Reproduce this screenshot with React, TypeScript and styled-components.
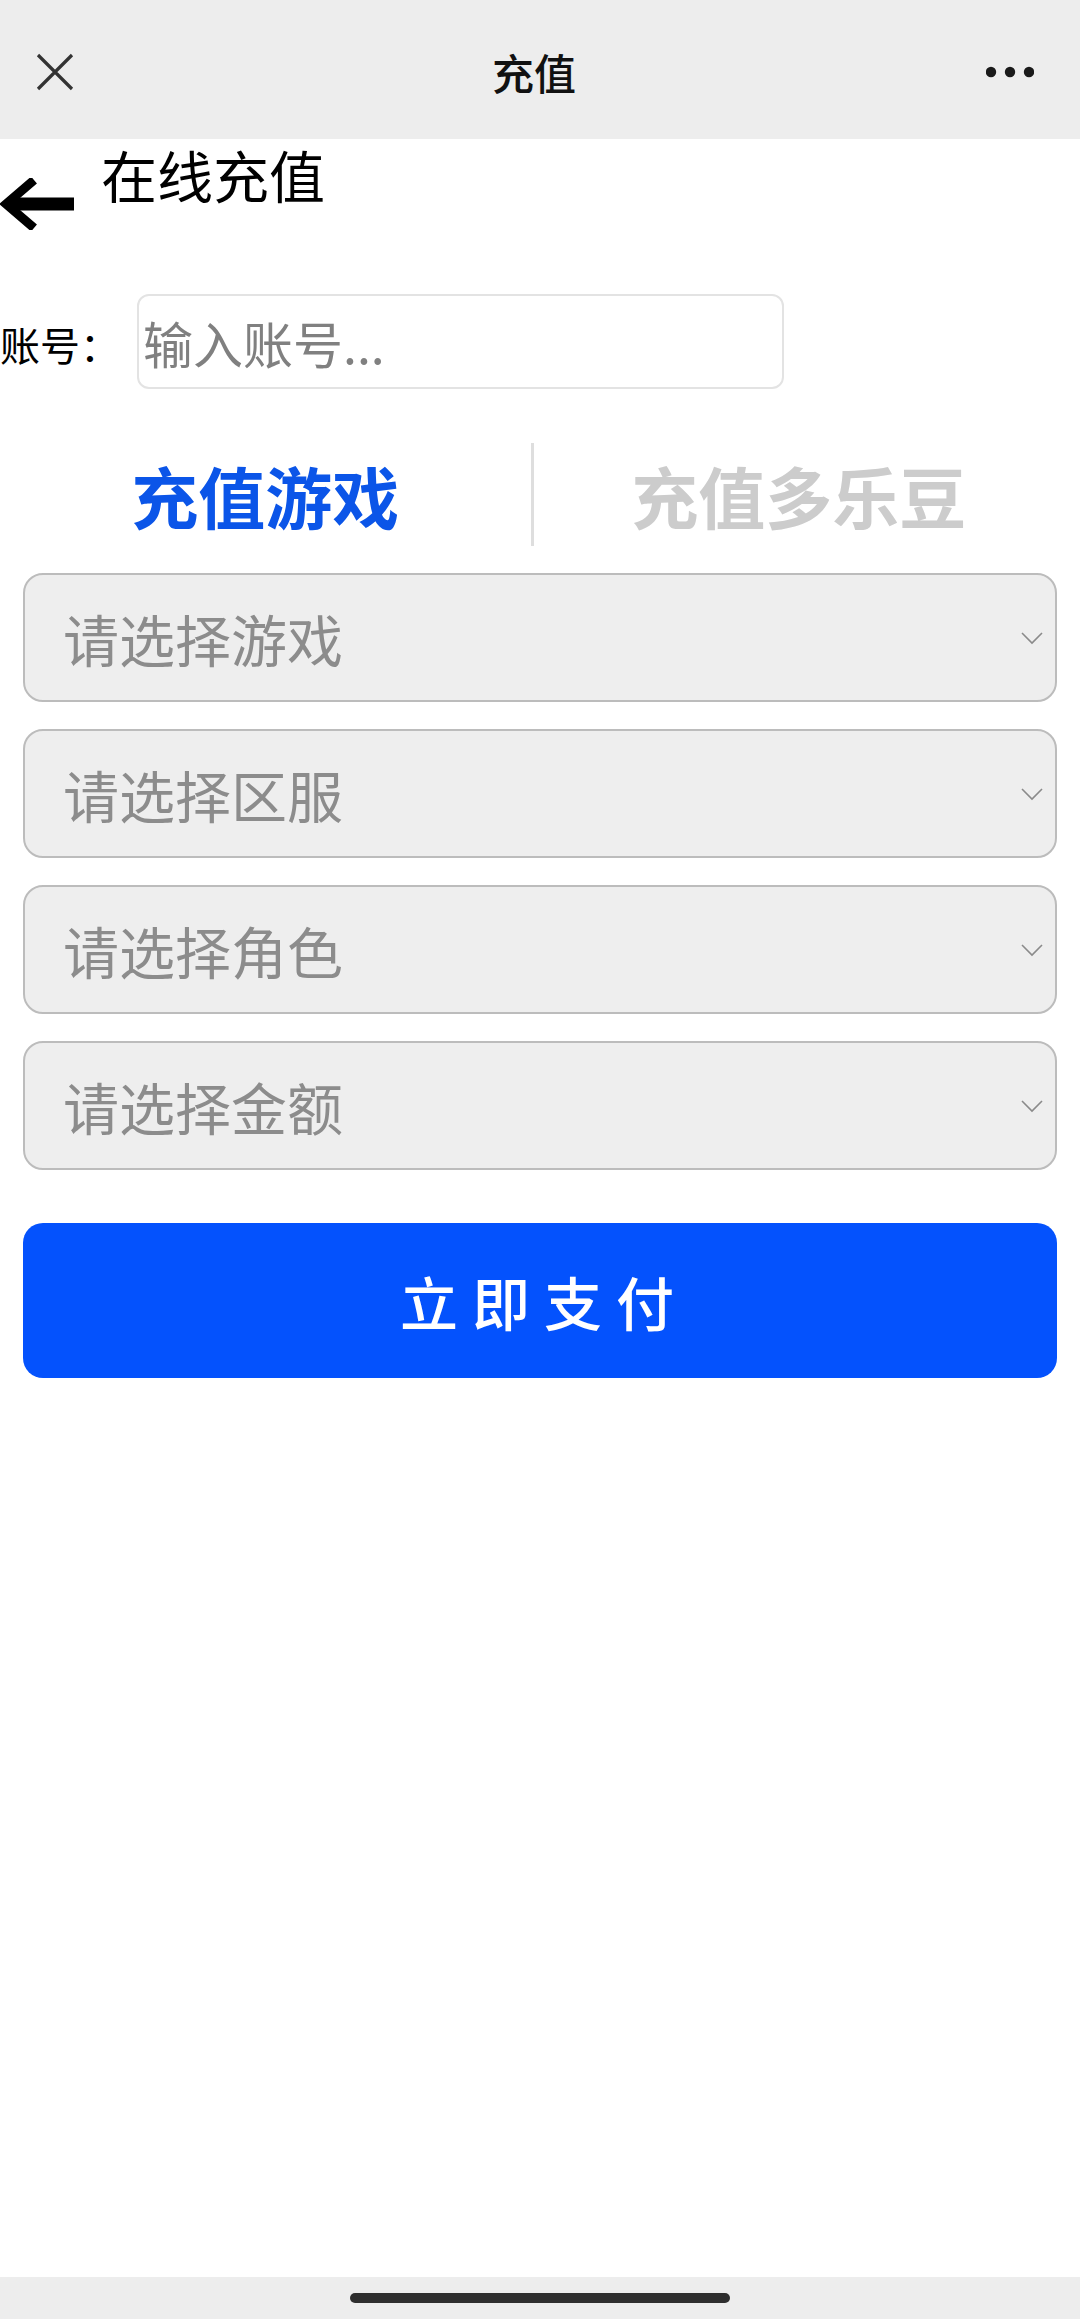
import React from 'react';
import styled, { createGlobalStyle } from 'styled-components';

const GlobalStyle = createGlobalStyle`
    html, body {
        margin: 0;
        padding: 0;
        background: #ffffff;
    }
    body {
        font-family: "Noto Sans CJK SC", "Noto Sans", sans-serif;
        color: #000;
    }
    * {
        box-sizing: border-box;
    }
`;

const Page = styled.div`
    display: flex;
    flex-direction: column;
    min-height: 100vh;
`;

const NavBar = styled.div`
    display: flex;
    align-items: center;
    justify-content: space-between;
    height: 139px;
    padding: 4px 46px 0 36px;
    background: #ededed;
    position: relative;
`;

const NavTitle = styled.div`
    position: absolute;
    left: 0;
    right: 12px;
    top: 4px;
    bottom: 0;
    display: flex;
    align-items: center;
    justify-content: center;
    font-size: 42px;
    font-weight: 500;
    color: #111;
    pointer-events: none;
`;

const Heading = styled.div`
    display: flex;
    align-items: flex-start;
    gap: 25px;
    padding-top: 7px;
`;

const BackArrow = styled.svg`
    margin-top: 32px;
    flex: 0 0 auto;
`;

const HeadingText = styled.h1`
    margin: 0;
    font-size: 56px;
    line-height: 1;
    font-weight: 400;
`;

const AccountRow = styled.div`
    display: flex;
    align-items: center;
    margin-top: 64px;
`;

const Label = styled.label`
    flex: 0 0 137px;
    font-size: 40px;
    line-height: 1;
    padding-top: 4px;
`;

const AccountInput = styled.input`
    width: 647px;
    height: 95px;
    border: 2px solid #e3e3e3;
    border-radius: 12px;
    padding: 0 0 0 4px;
    font-family: inherit;
    font-size: 50px;
    background: #fff;
    outline: none;

    &::placeholder {
        color: #808080;
    }
`;

const Tabs = styled.div`
    display: flex;
    align-items: center;
    height: 103px;
    margin-top: 54px;
    padding-right: 16px;
`;

const Tab = styled.div<{ $active?: boolean }>`
    flex: 1;
    text-align: center;
    font-size: 67px;
    font-weight: 700;
    line-height: 1;
    color: ${p => (p.$active ? '#0b55e8' : '#cccccc')};
`;

const TabDivider = styled.div`
    width: 3px;
    align-self: stretch;
    background: #dedede;
`;

const Form = styled.div`
    display: flex;
    flex-direction: column;
    gap: 27px;
    padding: 27px 23px 0;
`;

const Select = styled.div`
    display: flex;
    align-items: center;
    justify-content: space-between;
    height: 129px;
    padding: 0 12px 0 38px;
    background: #eeeeee;
    border: 2px solid #bcbcbc;
    border-radius: 20px;
`;

const SelectText = styled.span`
    font-size: 56px;
    line-height: 1;
    color: #8c8c8c;
`;

const PayButton = styled.button`
    margin: 53px 23px 0;
    height: 155px;
    border: none;
    border-radius: 20px;
    background: #0452fd;
    color: #ffffff;
    font-family: inherit;
    font-size: 58px;
    font-weight: 500;
    letter-spacing: 14px;
    padding-left: 14px;
`;

const Spacer = styled.div`
    flex: 1;
`;

const HomeBar = styled.div`
    display: flex;
    align-items: center;
    justify-content: center;
    height: 42px;
    background: #ededed;
`;

const HomeIndicator = styled.div`
    width: 380px;
    height: 10px;
    border-radius: 5px;
    background: #2e2e2e;
`;

const Chevron = () => (
    <svg width="22" height="14" viewBox="0 0 22 14">
        <path d="M1 2 L11 12 L21 2" fill="none" stroke="#8a8a8a" strokeWidth="1.6" />
    </svg>
);

const selects = ['请选择游戏', '请选择区服', '请选择角色', '请选择金额'];

const App = () => (
    <Page>
        <GlobalStyle />
        <NavBar>
            <svg width="38" height="38" viewBox="0 0 38 38">
                <path d="M2 2 L36 36 M36 2 L2 36" stroke="#333" strokeWidth="3.2" />
            </svg>
            <NavTitle>充值</NavTitle>
            <svg width="48" height="12" viewBox="0 0 48 12">
                <circle cx="5" cy="6" r="5.2" fill="#1a1a1a" />
                <circle cx="24" cy="6" r="5.2" fill="#1a1a1a" />
                <circle cx="43" cy="6" r="5.2" fill="#1a1a1a" />
            </svg>
        </NavBar>

        <Heading>
            <BackArrow width="76" height="52" viewBox="0 0 76 52">
                <path d="M74 26 H8" stroke="#000" strokeWidth="13" />
                <path d="M34 2 L6 26 L34 50" fill="none" stroke="#000" strokeWidth="9" />
            </BackArrow>
            <HeadingText>在线充值</HeadingText>
        </Heading>

        <AccountRow>
            <Label>账号：</Label>
            <AccountInput placeholder="输入账号..." />
        </AccountRow>

        <Tabs>
            <Tab $active>充值游戏</Tab>
            <TabDivider />
            <Tab>充值多乐豆</Tab>
        </Tabs>

        <Form>
            {selects.map(label => (
                <Select key={label}>
                    <SelectText>{label}</SelectText>
                    <Chevron />
                </Select>
            ))}
        </Form>

        <PayButton>立即支付</PayButton>

        <Spacer />
        <HomeBar>
            <HomeIndicator />
        </HomeBar>
    </Page>
);

export default App;
